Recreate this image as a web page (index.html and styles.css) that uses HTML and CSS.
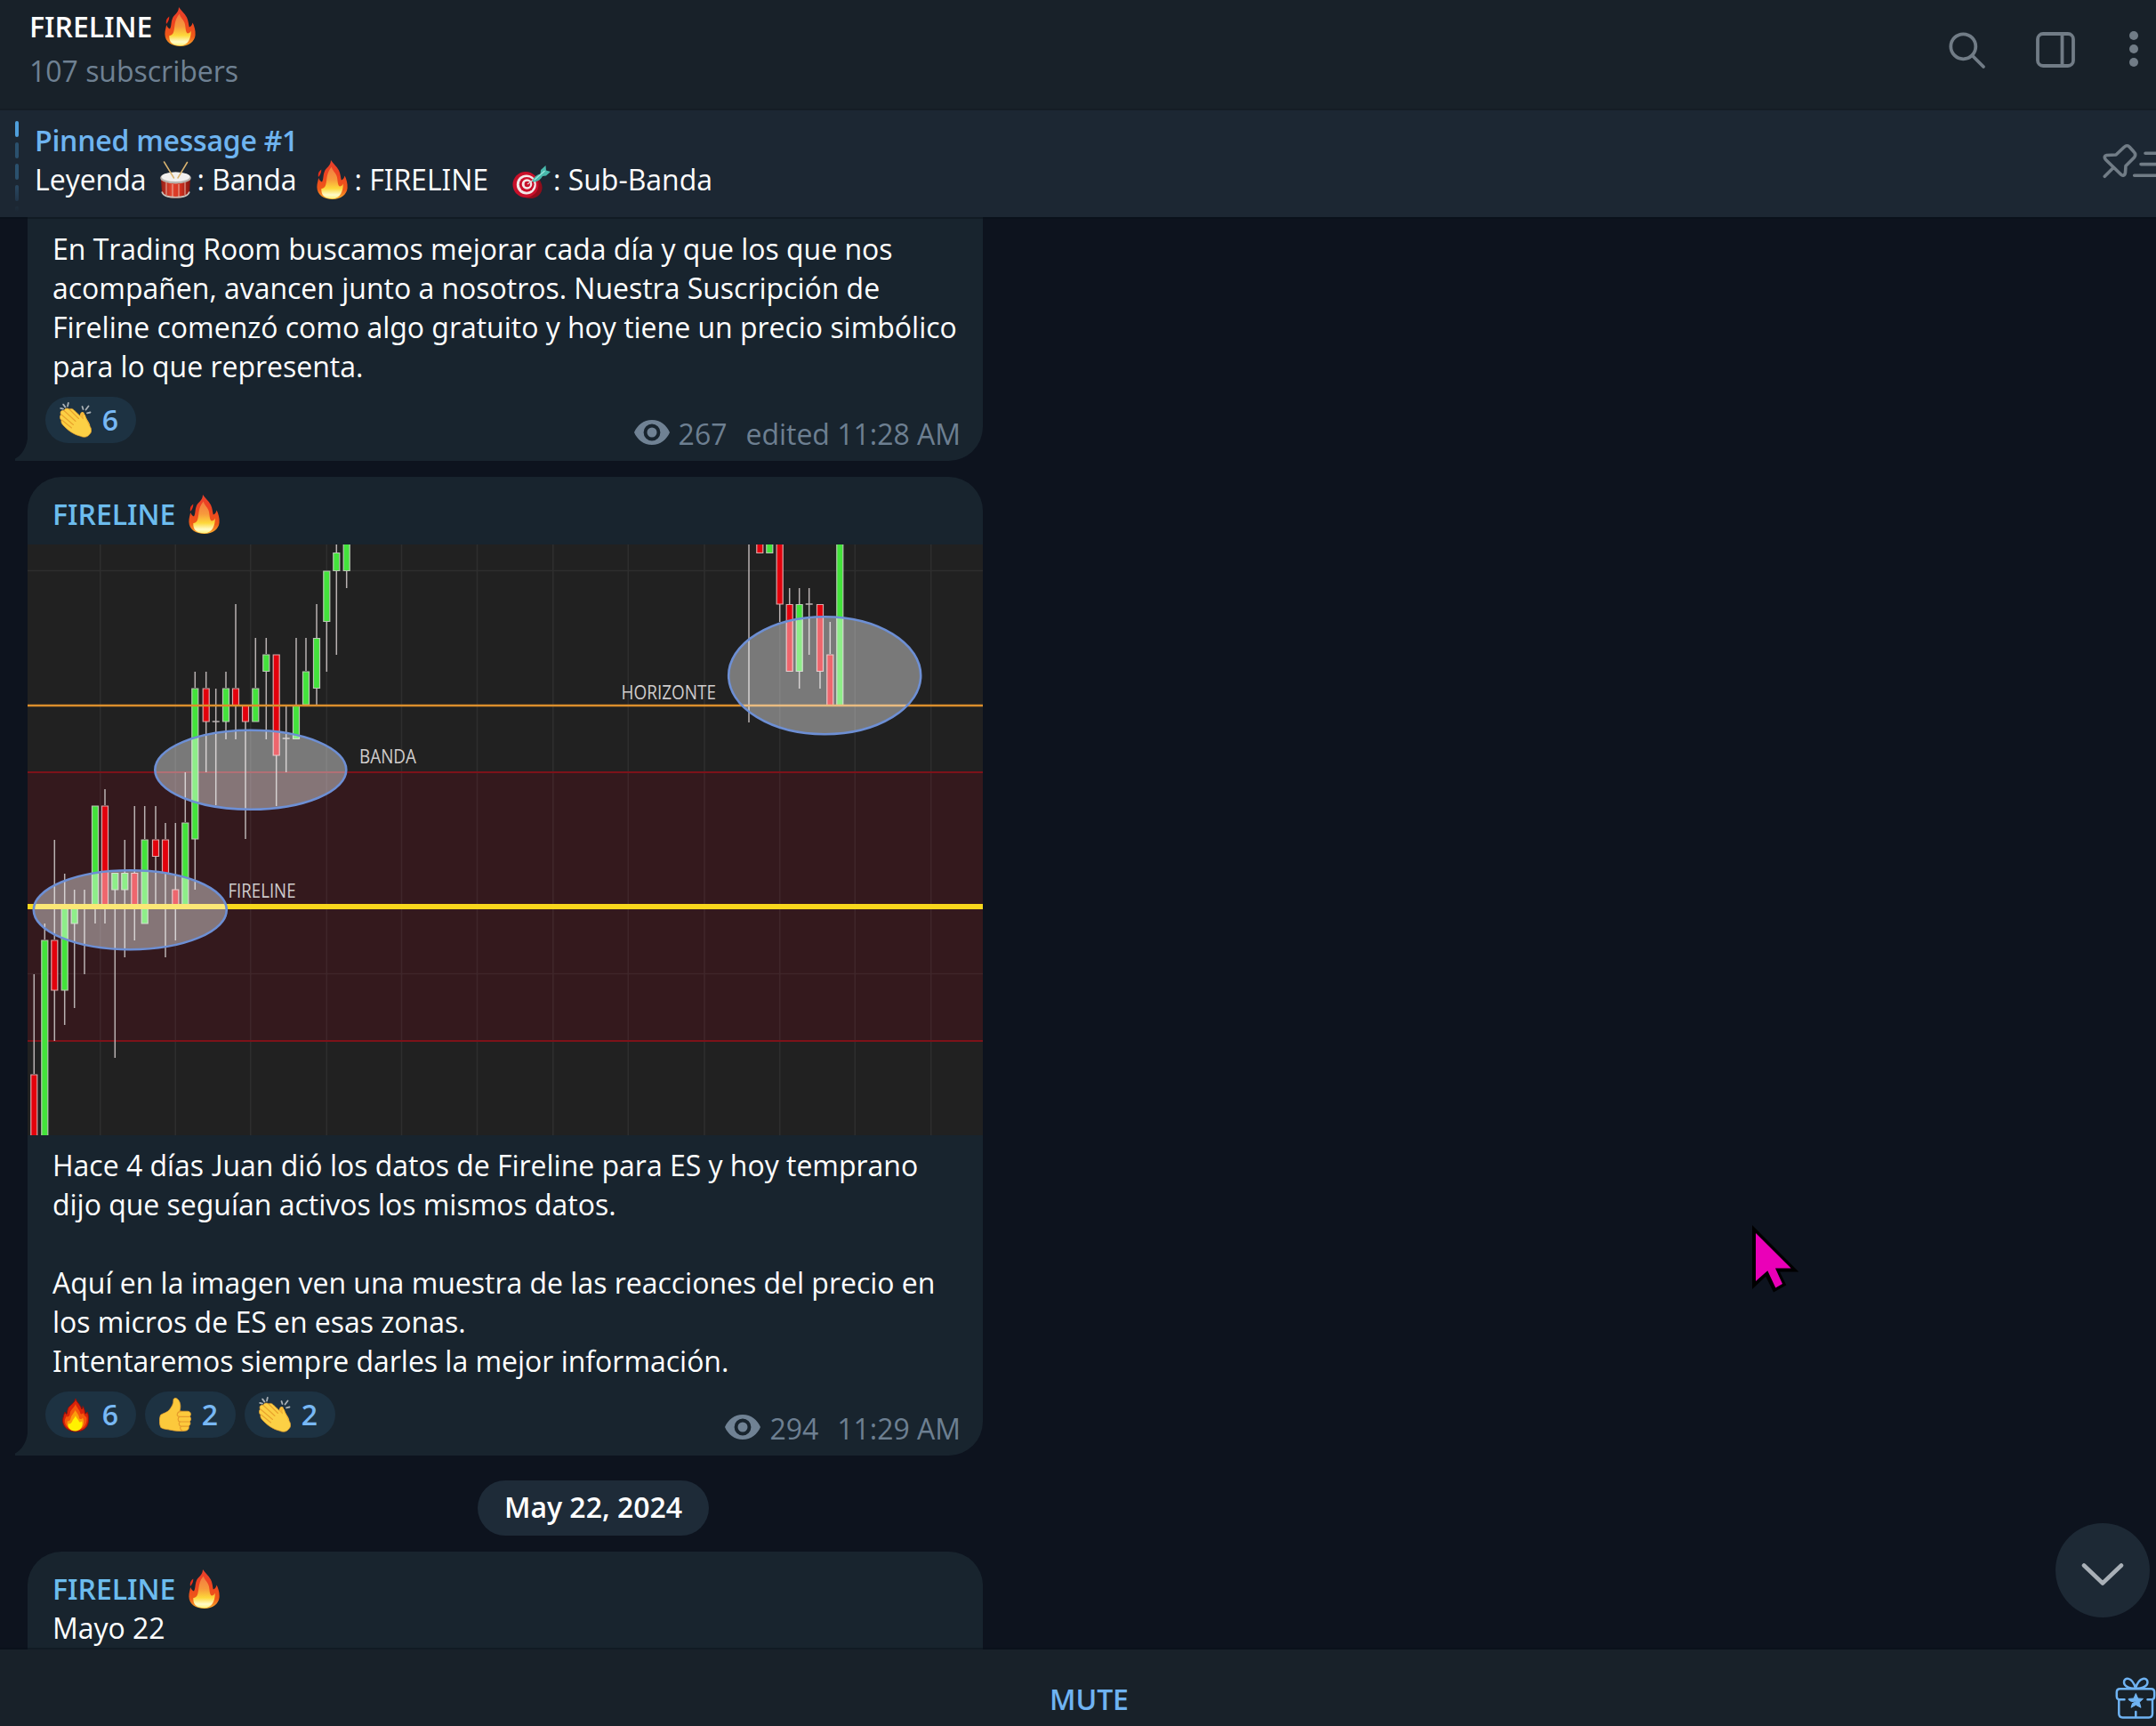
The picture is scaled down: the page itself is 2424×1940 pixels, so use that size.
FILE: index.html
```
<!DOCTYPE html>
<html lang="es">
<head>
<meta charset="utf-8">
<title>FIRELINE</title>
<link rel="stylesheet" href="styles.css">
</head>
<body>
<svg class="defs" width="0" height="0" aria-hidden="true">
  <defs>
    <linearGradient id="flameFill" x1="0" y1="0" x2="0" y2="1">
      <stop offset="0" stop-color="#e8402c"/><stop offset=".4" stop-color="#ee4420"/><stop offset=".75" stop-color="#ee5a18"/><stop offset="1" stop-color="#fbb02d"/>
    </linearGradient>
    <linearGradient id="flameCore" x1="0" y1="0" x2="0" y2="1">
      <stop offset="0" stop-color="#f27a40"/><stop offset=".4" stop-color="#f79a3c"/><stop offset=".68" stop-color="#fdd83a"/><stop offset=".88" stop-color="#fffbc8"/><stop offset="1" stop-color="#fff27a"/>
    </linearGradient>
    <linearGradient id="drumBody" x1="0" y1="0" x2="1" y2="0">
      <stop offset="0" stop-color="#8f1d16"/><stop offset=".35" stop-color="#e2442f"/><stop offset=".65" stop-color="#d5321f"/><stop offset="1" stop-color="#7e1510"/>
    </linearGradient>
    <symbol id="fire" viewBox="0 0 35 44">
      <path fill="url(#flameFill)" d="M16 0C18.500 4 22.500 6.500 25 11.500C27 15.500 26.800 19 27.800 22.500C29.800 22 31 20 31.600 17.500C33.500 21.500 35 26 34.600 31.500C33.800 39 27 44 18 44C8 44 .6 39 .4 30.500C.4 26 1.500 23.500 2.200 20C3 22 4 23.800 6 24.500C8 21.500 7 17 9 12.500C10.500 8.500 16 6.500 16 0Z"/>
      <path fill="#e8301a" d="M5.300 10.500C2 13 1.300 15.500 2 19C4 16.500 5.300 14.500 5.300 10.500Z"/>
      <path fill="url(#flameCore)" d="M16.800 7.500C17.500 12 22 14 23 19.500C23.800 24.500 23.800 29 26.300 29.500C28.300 29 29 28 29.800 26.500C30 34 27 43.300 17.500 43.300C8.500 43.300 5 39 5.300 32C7 32 9.300 31 10.300 27.500C12 21.500 10.500 15 16.800 7.500Z"/>
    </symbol>
    <symbol id="fire-flat" viewBox="0 0 30 39">
      <path fill="#d8230a" stroke="#8e120a" stroke-width="1" d="M15 1C16 5 20 7 22 13C23 12 23 11 23 9.500C25 12 25 15 26 18C27.500 17.500 27.500 17 28 16C29.500 19 29.700 22 29.500 26C29 34 23 38 15 38C7 38 .8 33 .6 26C.6 22 2 19 3 16C3.500 17.500 4 18 5 18.500C6 14 6 11 9 9C12 6 14 5 15 1Z"/>
      <path fill="#f4580c" d="M15 7C16 11 19.500 13 20.500 18C22 19 23 18 23.500 17C25 21 27 21 27.500 23C28 31 23 36.500 15 36.500C8 36.500 3 32 2.800 26C3 24 4 22.500 4.500 21C6 22 8 21 8.500 19C9 13 13 12 15 7Z"/>
      <path fill="#fb9c0c" d="M14.500 14C16 17 19 19 19 23C20 25 22 24 23 22.500C26 28 23 36.500 15 36.800C8 36.500 4 32 6 26C7 27 9 26 9.500 23C10.500 19 13 18 14.500 14Z"/>
      <path fill="#fff100" d="M15 20C15.500 23 18 24 19 27C20 28 21 27.500 22 26.500C24 32 20.500 37.400 14.500 37.400C8.500 37.400 5.500 33 7 29C8 30 10 29 11 27C12 24 14 23 15 20Z"/>
    </symbol>
    <symbol id="clap" viewBox="0 0 36 40">
      <g fill="none" stroke="#a9b0b5" stroke-width="1.800" stroke-linecap="round"><path d="M1.200 6.800L4 7.600M4.200 2.600L6.400 5.600M9.800 1L9 4.600M25.500 5L26.500 8M32.500 4.500L29.500 8.500M34.500 11.500L31 12.300"/></g>
      <path fill="#f6b93a" d="M23 18C22 12.500 25 9.500 27.500 12C28.500 17 33.500 22 34.300 26L33 34L22 28Z"/>
      <path fill="#fcd045" stroke="#e8a02c" stroke-width=".7" d="M1.500 14C0 10.500 2.500 8.500 5 9.500C6 6.500 9 6.500 11 8C13.500 6.500 15.500 8 17 9.800L26.500 18.800C25 14 27 12.500 28.500 14.500C29.500 19.500 32.500 22.500 33.300 26C36.500 30 36.500 34 33.300 36.500C31 39.800 27 39.800 23.500 38.300C16 36.500 9.500 32 5 27C2.500 24.500 1.500 23 2 20.500C.2 18.500 -.3 16 1.500 14Z"/>
      <path fill="none" stroke="#e9a22d" stroke-width="1.100" stroke-linecap="round" d="M5 9.500L18 21.500M2 14L15.500 25.500M2.500 20L13.500 29M11 8L21.500 18.500"/>
    </symbol>
    <symbol id="thumb" viewBox="0 0 36 38">
      <path fill="#fcc93c" stroke="#eca52f" stroke-width=".7" d="M16 2C16.500 -.2 19.500 0 21.200 2C24 5.500 24.500 10 23 15.200H32C36 15.500 36.300 19.500 34.300 21C36 22.500 36 25.500 34.300 26.800C35.500 28.500 35 31 33 32C34 34.500 32.500 37 29.500 37.200C24 37.800 18 37.500 14 36.500C9 35.500 4 35.300 1.800 33.500C0 30 -.2 23.500 1.500 19.500C4 17.500 9 16.800 11.500 13.500C14 10 16.200 7 16 2Z"/>
      <path fill="none" stroke="#e59a2b" stroke-width="1.200" stroke-linecap="round" d="M20.500 18C21 15.800 23 15.300 25 15.300M20.500 18C19.500 20 21 21.300 23 21.300H34M23 21.300C20.500 22.500 20.500 26.500 23.500 27H34M23.500 27C21.500 28.500 22 31.500 24.500 32.200H33M24.500 32.200C23 34 23.500 36 26 37"/>
    </symbol>
    <symbol id="drum" viewBox="0 0 35 42">
      <path fill="url(#drumBody)" d="M.8 18L2 35C2.500 39 9 41.600 17.500 41.600S32.500 39 33 35L34.200 18Z"/>
      <path fill="none" stroke="#e8b7a8" stroke-width="1" d="M7 24V38M14 26V41M21 26V41M28 24V38"/>
      <path fill="none" stroke="#c9c4bd" stroke-width="1.600" d="M2 34.500C3 38.500 9 40.800 17.500 40.800S32 38.500 33 34.500"/>
      <ellipse cx="17.500" cy="19" rx="17.300" ry="6.500" fill="#b9b3ad"/>
      <ellipse cx="17.500" cy="17.800" rx="16" ry="5.300" fill="#f2f1ef"/>
      <g stroke="#d9b370" stroke-width="1.500" stroke-linecap="round"><path d="M4.500 1L15.500 19M30.500 1.500L20 19"/></g>
    </symbol>
    <symbol id="target" viewBox="0 0 43 37">
      <ellipse cx="18" cy="23" rx="16" ry="13.500" fill="#8f0d1b" transform="rotate(25 18 23)"/>
      <circle cx="15" cy="21.500" r="14.500" fill="#c8102a"/>
      <circle cx="15.800" cy="21.400" r="11" fill="#f3e9e9"/>
      <circle cx="16.200" cy="21.300" r="8.400" fill="#c8102a"/>
      <circle cx="16.500" cy="21" r="5.800" fill="#f3e9e9"/>
      <circle cx="16.800" cy="21" r="3.200" fill="#c8102a"/>
      <path d="M17 21L24 16" stroke="#d8d8d8" stroke-width="1.500"/>
      <path fill="#49b8ac" d="M22.500 18C23.500 13.500 26.500 11 31.500 9.500L32 5L37.500 0L38 5.500L43 7L38 11.500L34 12C32 15.500 29 18 24 18.500Z"/>
      <path stroke="#9be6dc" stroke-width="1.200" d="M24.500 16.500L36.500 6"/>
    </symbol>
    <symbol id="eye" viewBox="0 0 40 28">
      <path fill="#708294" fill-rule="evenodd" d="M20 0C29.500 0 36.500 6 40 14C36.500 22 29.500 28 20 28S3.500 22 0 14C3.500 6 10.500 0 20 0ZM20 4.600A9.400 9.400 0 1 0 20 23.400A9.400 9.400 0 1 0 20 4.600ZM20 8.500A5.500 5.500 0 1 1 20 19.500A5.500 5.500 0 1 1 20 8.500Z"/>
    </symbol>
    <symbol id="tail" viewBox="0 0 14 25">
      <path fill="#18242e" d="M14 0V25H0V22.500C7 19 12.500 11 14 0Z"/>
    </symbol>
  </defs>
</svg>

<header class="topbar">
  <div class="topbar-info">
    <div class="title">FIRELINE<svg class="fire"><use href="#fire"/></svg></div>
    <div class="subtitle">107 subscribers</div>
  </div>
  <div class="topbar-actions">
    <svg class="icon-search" viewBox="0 0 42 42"><circle cx="16.300" cy="16.300" r="14" /><path d="M26.500 26.500L39 39"/></svg>
    <svg class="icon-panel" viewBox="0 0 44 40"><rect x="2" y="2" width="40" height="36" rx="6"/><path d="M29.500 3V37"/></svg>
    <svg class="icon-dots" viewBox="0 0 10 40"><circle cx="5" cy="5" r="5"/><circle cx="5" cy="20" r="5"/><circle cx="5" cy="35" r="5"/></svg>
  </div>
</header>

<section class="pinned">
  <div class="pinned-marks"><i></i><i></i><i></i><i></i><i></i></div>
  <div class="pinned-body">
    <div class="pinned-title">Pinned message #1</div>
    <div class="pinned-text"><span>Leyenda</span><svg class="drum"><use href="#drum"/></svg><span>: Banda</span><svg class="fire"><use href="#fire"/></svg><span>: FIRELINE</span><svg class="target"><use href="#target"/></svg><span>: Sub-Banda</span></div>
  </div>
  <svg class="icon-pin" viewBox="0 0 64 44"><path d="M8.500 14.500L19 14L28 5.500C30.500 3.200 32.500 3.200 34.500 5.500L39 10.500C41 12.500 41 15 39.500 17L30 26.500L29.500 34C29 37.500 26.500 38 24.500 36L7.500 19.500C5.500 17 6 15 8.500 14.500ZM16.300 28.300L6.300 38.300M52 12.200H66M47 24.600H66M39.700 37.200H66"/></svg>
</section>

<main class="chat">
  <article class="bubble bubble-first">
    <p class="text">En Trading Room buscamos mejorar cada día y que los que nos<br>acompañen, avancen junto a nosotros. Nuestra Suscripción de<br>Fireline comenzó como algo gratuito y hoy tiene un precio simbólico<br>para lo que representa.</p>
    <footer class="foot">
      <div class="reactions"><span class="pill"><svg class="e-clap"><use href="#clap"/></svg>6</span></div>
      <div class="meta"><svg class="eye"><use href="#eye"/></svg><span class="views">267</span><span>edited 11:28 AM</span></div>
    </footer>
    <svg class="tail"><use href="#tail"/></svg>
  </article>

  <article class="bubble bubble-photo">
    <div class="author">FIRELINE<svg class="fire"><use href="#fire"/></svg></div>
    <svg class="chart" viewBox="0 0 1074 664">
      <rect width="1074" height="664" fill="#212121"/>
      <rect y="256" width="1074" height="302" fill="#34191d"/>
      <path stroke="#fff" stroke-opacity=".06" stroke-width="1.600" d="M81.700 0V664M166.300 0V664M250.700 0V664M336.300 0V664M420.500 0V664M505.500 0V664M590.800 0V664M675.300 0V664M761 0V664M845.700 0V664M930.300 0V664M1015.700 0V664M0 29.500H1074M0 482.500H1074"/>
      <path stroke="#7d1219" stroke-width="2.200" d="M0 256H1074M0 558H1074"/>
      <path class="wick" d="M7.300 483V595M19.300 426V444M30.300 332V444M30.300 501V558M41.700 370V408M41.700 501V540M52.700 388V408M52.700 426V521M64 388V483M76 408V426M87 275V293M87 408V426M98.300 388V577M109.300 332V369M109.300 388V464M120.300 294V369M120.300 408V445M131.700 294V331M144 294V331M144 351V408M155 313V331M155 370V464M166.300 313V388M166.300 408V445M177.300 256V312M188.300 143V161M188.300 331V388M200.700 143V161M200.700 199V256M211.700 162V293M207.700 199H215.700M223 143V161M223 199V219M234 67V161M234 181V219M245 199V331M256.300 105V161M268.300 105V123M268.300 143V219M279.700 237V294M290.700 181V256M286.700 218H294.700M302 105V181M313 105V142M325 67V105M325 162V181M336.300 86V143M347.300 0V9M347.300 30V124M358.700 30V49M811 0V200M845.700 67V87M856.700 49V67M867.700 49V67M867.700 143V162M878.700 49V124M874.700 67H882.700M891 143V162M902.300 87V123"/>
      <path class="up" d="M15.800 445h7v225h-7zM38.200 408h7v93h-7zM49.200 408h7v18h-7zM72.500 294h7v114h-7zM94.800 369.500h7v18.500h-7zM105.800 369.500h7v18.500h-7zM128.200 332h7v94h-7zM173.800 313h7v95h-7zM184.800 162h7v169h-7zM219.500 162h7v37h-7zM252.800 162h7v37h-7zM264.800 124h7v18.500h-7zM298.500 181.500h7v37h-7zM309.500 143h7v37h-7zM321.500 105.500h7v56h-7zM332.800 30h7v56.500h-7zM343.800 9.500h7v20h-7zM355.200 -5h7v34.500h-7zM830.800 -5h7v14.500h-7zM864.200 67.500h7v75h-7zM909.800 -5h7v185.500h-7z"/>
      <path class="down" d="M3.800 596h7v75h-7zM26.800 445h7v56h-7zM83.500 294h7v114h-7zM116.800 369.500h7v38.500h-7zM140.500 332h7v18.500h-7zM151.500 332h7v37.500h-7zM162.800 388h7v20h-7zM197.200 162h7v37h-7zM230.500 162h7v19h-7zM241.500 181.500h7v17.500h-7zM276.200 124h7v113h-7zM819.800 -5h7v14.500h-7zM842.200 -5h7v72h-7zM853.200 67.500h7v75h-7zM887.500 67.500h7v75h-7zM898.800 124h7v56.500h-7z"/>
      <path stroke="#db8e2c" stroke-width="2.600" d="M0 181H1074"/>
      <path stroke="#f8d71c" stroke-width="6" d="M0 407H1074"/>
      <g fill="#fff" fill-opacity=".4" stroke="#6d8fd4" stroke-width="2.600">
        <ellipse cx="250.800" cy="253.300" rx="107.500" ry="44.500"/><ellipse cx="115.300" cy="410.700" rx="108.500" ry="44.500"/><ellipse cx="896.200" cy="147.300" rx="108" ry="66"/>
      </g>
      <g class="chart-label"><text x="373" y="245.500" textLength="64" lengthAdjust="spacingAndGlyphs">BANDA</text><text x="225.500" y="396.500" textLength="76" lengthAdjust="spacingAndGlyphs">FIRELINE</text><text x="667.500" y="174" textLength="106.500" lengthAdjust="spacingAndGlyphs">HORIZONTE</text></g>
    </svg>
    <p class="text">Hace 4 días Juan dió los datos de Fireline para ES y hoy temprano<br>dijo que seguían activos los mismos datos.<br><br>Aquí en la imagen ven una muestra de las reacciones del precio en<br>los micros de ES en esas zonas.<br>Intentaremos siempre darles la mejor información.</p>
    <footer class="foot">
      <div class="reactions">
        <span class="pill"><svg class="e-fire"><use href="#fire-flat"/></svg>6</span>
        <span class="pill"><svg class="e-thumb"><use href="#thumb"/></svg>2</span>
        <span class="pill"><svg class="e-clap"><use href="#clap"/></svg>2</span>
      </div>
      <div class="meta"><svg class="eye"><use href="#eye"/></svg><span class="views">294</span><span>11:29 AM</span></div>
    </footer>
    <svg class="tail"><use href="#tail"/></svg>
  </article>

  <div class="date">May 22, 2024</div>

  <article class="bubble bubble-last">
    <div class="author">FIRELINE<svg class="fire"><use href="#fire"/></svg></div>
    <p class="text">Mayo 22</p>
  </article>

  <button class="to-bottom" aria-label="Scroll to bottom"><svg viewBox="0 0 48 28"><path d="M3 3.500L24 23.500L45 3.500"/></svg></button>
</main>

<footer class="bottombar">
  <div class="mute">MUTE</div>
  <svg class="icon-gift" viewBox="0 0 48 54"><g fill="none" stroke="#6fb3f2" stroke-width="2.500" stroke-linecap="round" stroke-linejoin="round"><path d="M12.500 28.300H7.500C5 28.300 3.800 27 3.800 24.500V20C3.800 17.500 5 16.200 7.500 16.200H42.500C45 16.200 46.200 17.500 46.200 20V24.500C46.200 27 45 28.300 42.500 28.300H38.500M6.300 28.500V44C6.300 47 7.500 48.400 10.500 48.400H40C43 48.400 44 47 44 44V28.500M25.300 42V47.500"/><path d="M25 15.500C21 16.500 12 14.500 12 8.800C12 3 21 2 25 15.500ZM25 15.500C29 16.500 38.500 14.500 38.500 8.800C38.500 3 29 2 25 15.500Z"/></g><path fill="#6fb3f2" stroke="#6fb3f2" stroke-linejoin="round" d="M25.300 21.500L27.700 27L33.500 27.400L29.300 31.300L31 37.300L25.300 34.300L20 37.300L21.500 32.500L27 30L20.300 30.600L17.200 28.500V27.400L23 27Z"/></svg>
</footer>

<svg class="cursor" viewBox="0 0 53 76"><path fill="#000" d="M0 0L52.300 52.400H31L38.300 67.400L24 75.400L15.300 57.800L0 72Z"/><path fill="#ea00b8" d="M4 9L43.700 48.600H26L34 66L26.300 70.400L17.300 51.300L4 63Z"/></svg>
</body>
</html>
```
FILE: styles.css
```
* { box-sizing: border-box; }
html, body { margin: 0; }
body {
  position: relative;
  width: 2424px;
  height: 1940px;
  overflow: hidden;
  display: flex;
  flex-direction: column;
  background: #0d131e;
  color: #fff;
  font: 400 32px/44px "Open Sans", sans-serif;
  font-feature-settings: "ss01";
  letter-spacing: -.018px;
  white-space: nowrap;
}
p { margin: 0; }
svg { display: block; flex: none; }
.defs { position: absolute; }
.fire { width: 35px; height: 44px; }

.topbar {
  height: 124px;
  padding: 8px 20px 0 33px;
  display: flex;
  justify-content: space-between;
  background: #182129;
  border-bottom: 2px solid #151d25;
}
.topbar-info { display: flex; flex-direction: column; gap: 6px; }
.title, .author { display: flex; font-weight: 600; letter-spacing: -.05px; }
.title .fire, .author .fire { margin-left: 14px; }
.subtitle { color: #6f8193; }
.topbar-actions { display: flex; align-items: flex-start; padding-top: 28px; }
.icon-search, .icon-panel, .icon-pin { fill: none; stroke: #717c86; stroke-width: 3.800; stroke-linecap: round; stroke-linejoin: round; }
.icon-search { width: 42px; height: 42px; margin-right: 56px; }
.icon-panel { width: 44px; height: 40px; margin-right: 61px; }
.icon-dots { width: 10px; height: 40px; fill: #717c86; margin-top: -1px; }

.pinned {
  height: 120px;
  padding: 12px 0 0 17px;
  display: flex;
  background: #1c2733;
}
.pinned-marks { display: flex; flex-direction: column; gap: 6px; width: 4px; margin-right: 18px; }
.pinned-marks i { height: 18px; flex: none; border-radius: 2px; background: #2b516e; }
.pinned-marks i:nth-child(1) { background: #4f9fdc; }
.pinned-marks i:nth-child(4) { background: linear-gradient(#294760, #22364a); }
.pinned-marks i:nth-child(5) { height: 6px; background: linear-gradient(#1f2e3c, #1c2733); }
.pinned-body { flex: 1; }
.pinned-title { font-weight: 600; letter-spacing: -.24px; color: #6eb4f0; }
.pinned-text { display: flex; }
.drum { width: 35px; height: 42px; margin: 1px 7px 0 15px; }
.pinned-text .fire { margin: 0 8px 0 22px; }
.target { width: 43px; height: 37px; margin: 6px 3px 0 27px; }
.icon-pin { width: 64px; height: 44px; margin-top: 24px; stroke-width: 3.600; }

.chat {
  position: relative;
  flex: 1;
  min-height: 0;
  overflow: hidden;
  padding-left: 31px;
  display: flex;
  flex-direction: column;
  align-items: flex-start;
}
.chat::before, .chat::after { content: ""; position: absolute; left: 0; right: 0; height: 2px; background: rgba(8, 14, 22, .4); z-index: 1; }
.chat::before { top: 0; }
.chat::after { bottom: 0; }
.bubble { position: relative; flex: none; width: 1074px; background: #18242e; border-radius: 38px 38px 38px 0; }
.bubble-first { height: 274px; padding-top: 14px; border-top-left-radius: 0; border-top-right-radius: 0; }
.bubble-photo { margin-top: 18px; height: 1100px; }
.bubble-last { height: 200px; }
.text { padding-left: 28px; }
.author { padding: 20px 0 0 28px; color: #6cbcee; }
.author .fire { margin-left: 15px; }
.bubble-photo .author { height: 76px; }
.chart { width: 1074px; height: 664px; margin-bottom: 12px; }
.foot { height: 84px; padding: 12px 25px 8px 20px; display: flex; justify-content: space-between; }
.reactions { display: flex; gap: 10px; }
.pill { width: 102px; height: 52px; padding: 0 20px 0 16px; display: flex; align-items: center; justify-content: space-between; border-radius: 26px; background: #1d3242; color: #78b8f4; font-weight: 600; }
.e-clap { width: 36px; height: 40px; }
.e-thumb { width: 36px; height: 38px; }
.e-fire { width: 30px; height: 39px; margin-left: 3px; }
.meta { display: flex; align-items: flex-end; color: #6d7f91; }
.eye { width: 40px; height: 28px; margin: 0 10px 10px 0; }
.views { margin-right: 21px; }
.tail { position: absolute; left: -14px; bottom: 0; width: 14px; height: 25px; }

.date { flex: none; width: 260px; height: 62px; margin: 28px 0 18px 506px; line-height: 60px; text-align: center; border-radius: 31px; background: #1e2b38; font-weight: 600; }
.to-bottom { position: absolute; left: 2311px; top: 1468px; width: 106px; height: 106px; padding: 0; border: 0; border-radius: 50%; background: #1d2935; display: flex; align-items: center; justify-content: center; }
.to-bottom svg { width: 48px; height: 28px; margin-top: 9px; fill: none; stroke: #a9b0b7; stroke-width: 4.600; stroke-linecap: round; stroke-linejoin: round; }

.wick { stroke: #b9b2b2; stroke-width: 1.500; }
.up, .down { stroke: #b9c8b4; stroke-width: 1.200; }
.up { fill: #43e33b; }
.down { fill: #e3000c; stroke: #d9a9aa; }
.chart-label { fill: #cfcccc; font: 400 21.500px "Open Sans", sans-serif; font-feature-settings: normal; letter-spacing: 0; }

.bottombar { height: 86px; padding-left: 73px; display: flex; background: #182129; }
.mute { flex: 1; padding-top: 34px; text-align: center; color: #6fb3f2; font-weight: 600; letter-spacing: -.1px; }
.icon-gift { width: 48px; height: 54px; margin-top: 28px; }

.cursor { position: absolute; left: 1970px; top: 1377px; width: 53px; height: 76px; }
```
